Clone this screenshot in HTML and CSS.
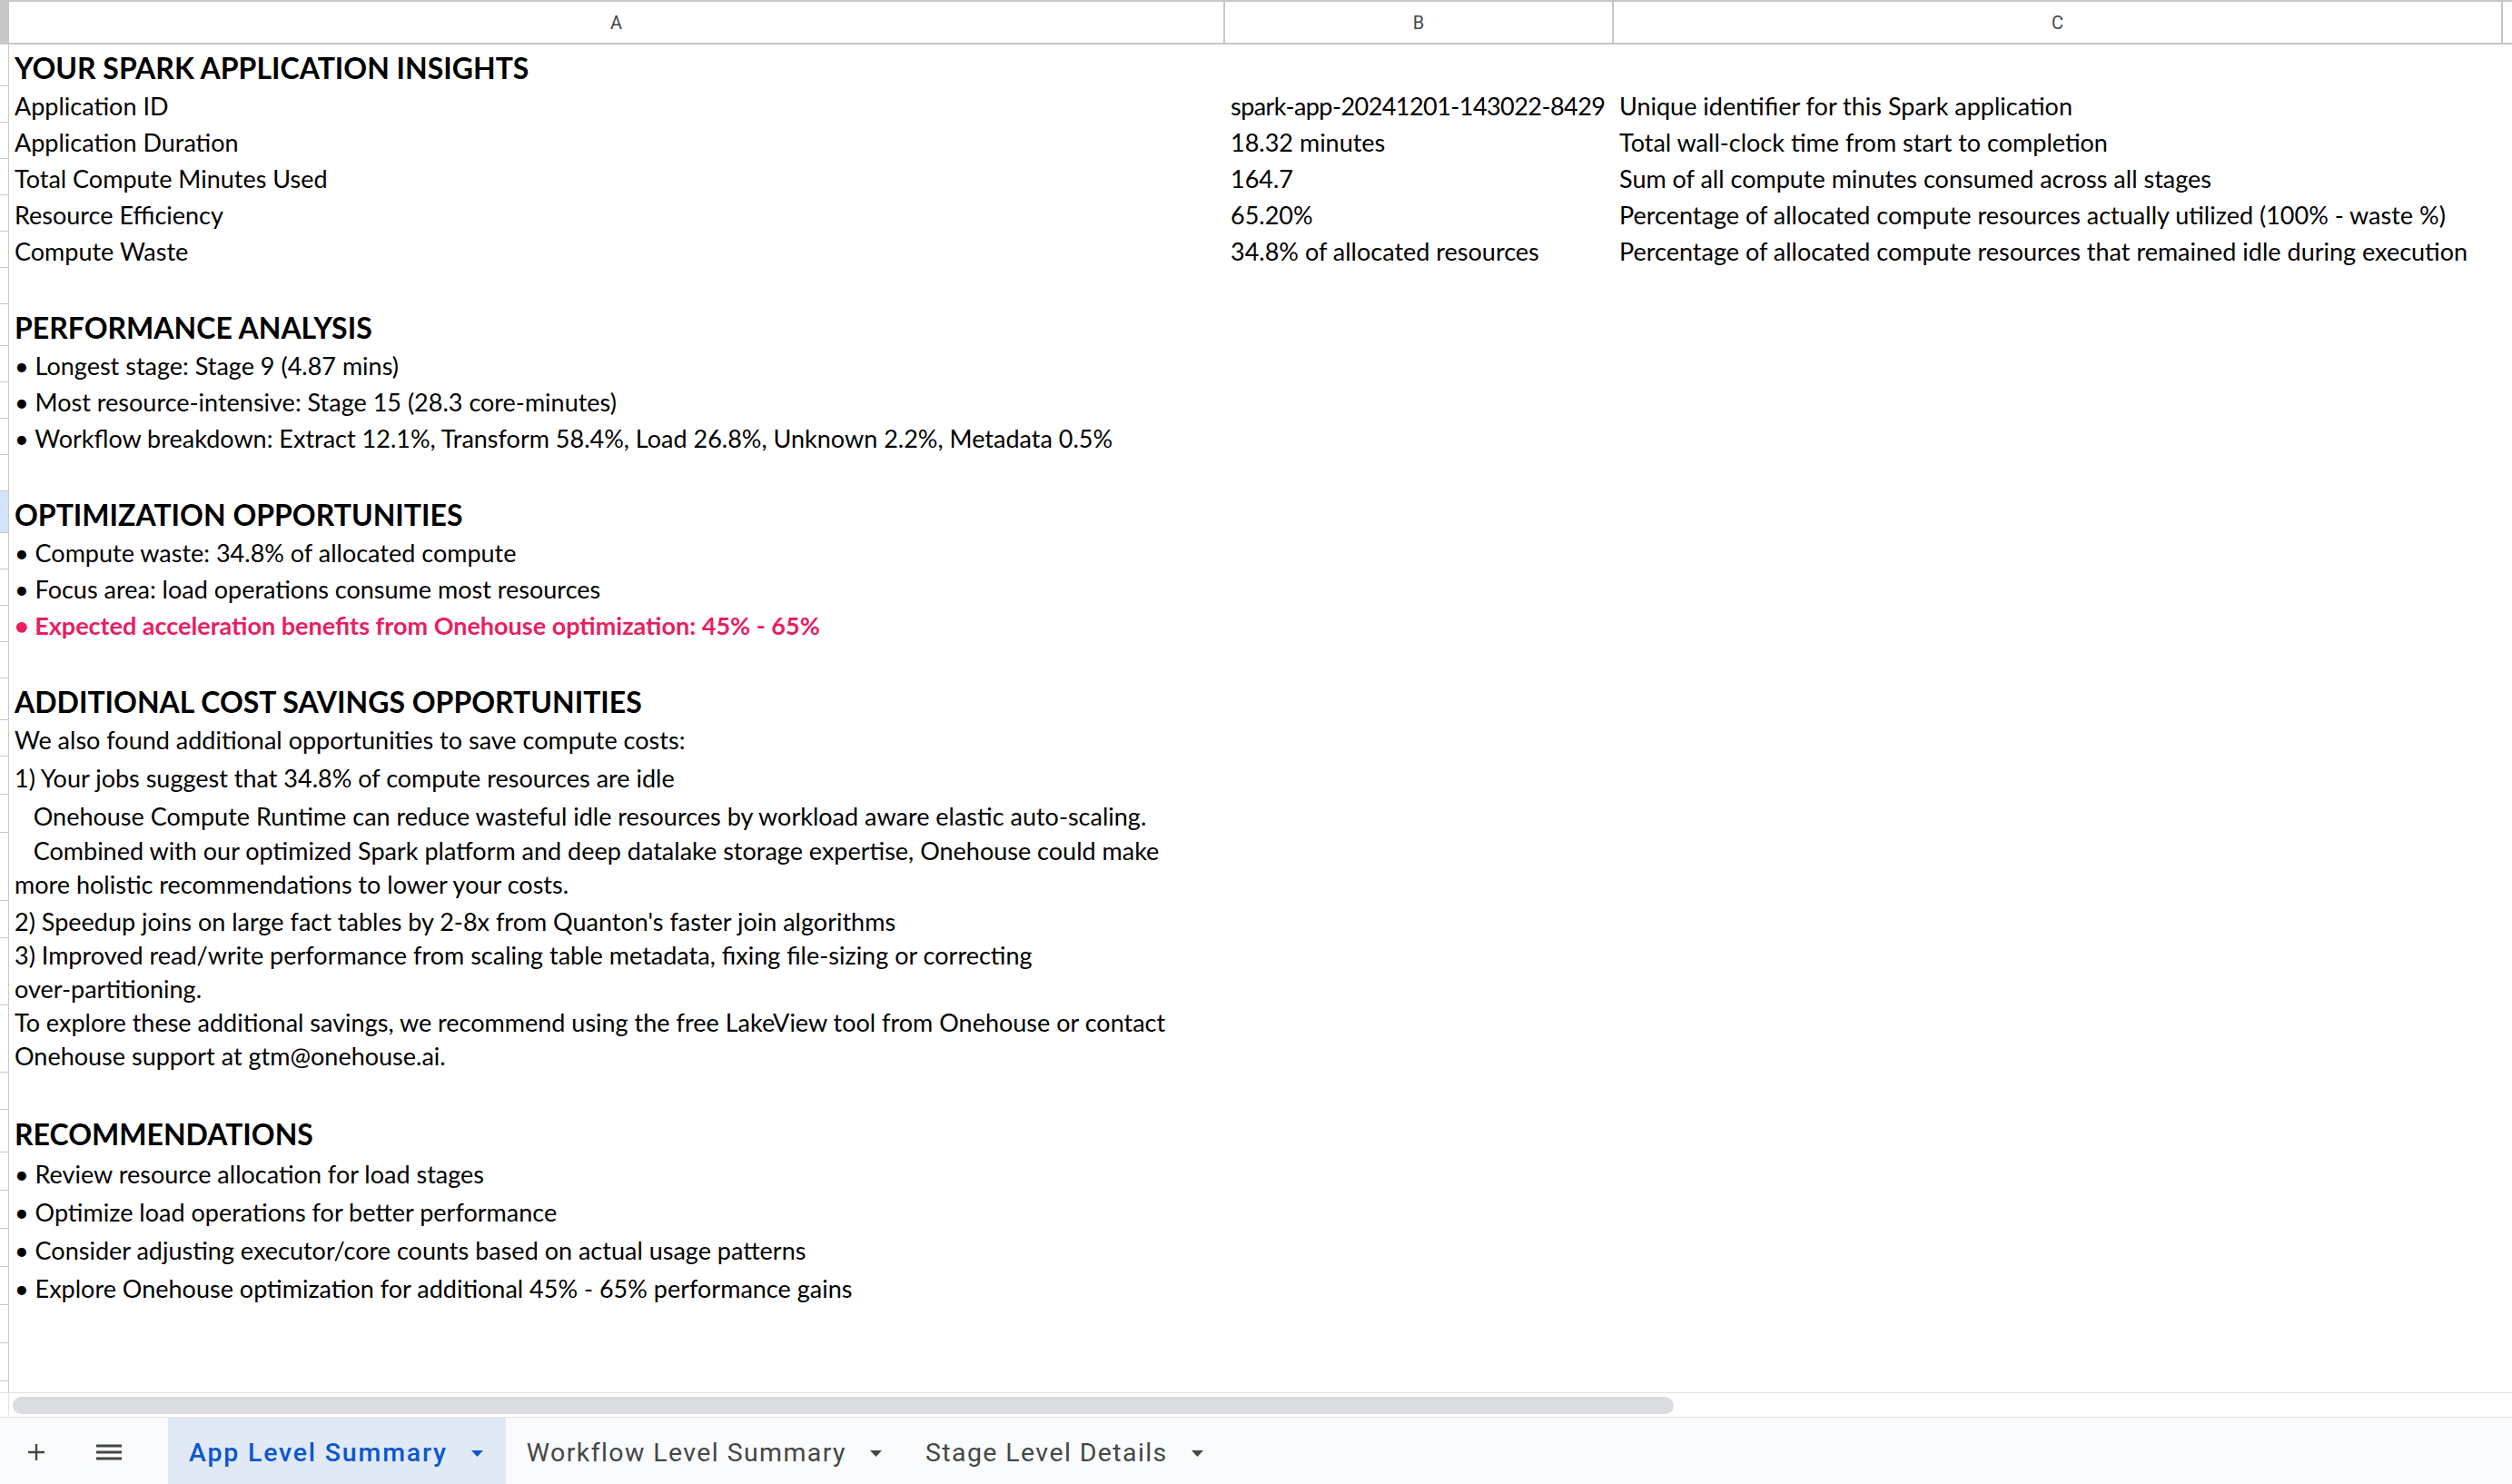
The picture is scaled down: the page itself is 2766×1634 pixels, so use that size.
FILE: index.html
```html
<!DOCTYPE html>
<html lang="en">
<head>
<meta charset="utf-8">
<title>App Level Summary</title>
<link rel="stylesheet" href="styles.css">
</head>
<body>
<div class="app">
  <div class="sheet">
    <div class="colhead">
      <div class="corner"></div>
      <div class="ch">A</div>
      <div class="ch">B</div>
      <div class="ch">C</div>
      <div class="ch last"></div>
    </div>

    <div class="row h46"><div class="rh"></div><div class="cell hd">YOUR SPARK APPLICATION INSIGHTS</div><div class="cell"></div><div class="cell"></div><div class="cell"></div></div>
    <div class="row h40"><div class="rh"></div><div class="cell">Application ID</div><div class="cell tight">spark-app-20241201-143022-8429</div><div class="cell">Unique identifier for this Spark application</div><div class="cell"></div></div>
    <div class="row h40"><div class="rh"></div><div class="cell">Application Duration</div><div class="cell">18.32 minutes</div><div class="cell">Total wall-clock time from start to completion</div><div class="cell"></div></div>
    <div class="row h40"><div class="rh"></div><div class="cell">Total Compute Minutes Used</div><div class="cell">164.7</div><div class="cell">Sum of all compute minutes consumed across all stages</div><div class="cell"></div></div>
    <div class="row h40"><div class="rh"></div><div class="cell">Resource Efficiency</div><div class="cell">65.20%</div><div class="cell">Percentage of allocated compute resources actually utilized (100% - waste %)</div><div class="cell"></div></div>
    <div class="row h40"><div class="rh"></div><div class="cell">Compute Waste</div><div class="cell">34.8% of allocated resources</div><div class="cell">Percentage of allocated compute resources that remained idle during execution</div><div class="cell"></div></div>
    <div class="row h40"><div class="rh"></div><div class="cell"></div><div class="cell"></div><div class="cell"></div><div class="cell"></div></div>

    <div class="row h46"><div class="rh"></div><div class="cell hd">PERFORMANCE ANALYSIS</div><div class="cell"></div><div class="cell"></div><div class="cell"></div></div>
    <div class="row h40"><div class="rh"></div><div class="cell">• Longest stage: Stage 9 (4.87 mins)</div><div class="cell"></div><div class="cell"></div><div class="cell"></div></div>
    <div class="row h40"><div class="rh"></div><div class="cell">• Most resource-intensive: Stage 15 (28.3 core-minutes)</div><div class="cell"></div><div class="cell"></div><div class="cell"></div></div>
    <div class="row h40"><div class="rh"></div><div class="cell">• Workflow breakdown: Extract 12.1%, Transform 58.4%, Load 26.8%, Unknown 2.2%, Metadata 0.5%</div><div class="cell"></div><div class="cell"></div><div class="cell"></div></div>
    <div class="row h40"><div class="rh"></div><div class="cell"></div><div class="cell"></div><div class="cell"></div><div class="cell"></div></div>

    <div class="row h46"><div class="rh sel"></div><div class="cell hd">OPTIMIZATION OPPORTUNITIES</div><div class="cell"></div><div class="cell"></div><div class="cell"></div></div>
    <div class="row h40"><div class="rh"></div><div class="cell">• Compute waste: 34.8% of allocated compute</div><div class="cell"></div><div class="cell"></div><div class="cell"></div></div>
    <div class="row h40"><div class="rh"></div><div class="cell">• Focus area: load operations consume most resources</div><div class="cell"></div><div class="cell"></div><div class="cell"></div></div>
    <div class="row h40"><div class="rh"></div><div class="cell pink">• Expected acceleration benefits from Onehouse optimization: 45% - 65%</div><div class="cell"></div><div class="cell"></div><div class="cell"></div></div>
    <div class="row h40"><div class="rh"></div><div class="cell"></div><div class="cell"></div><div class="cell"></div><div class="cell"></div></div>

    <div class="row h46"><div class="rh"></div><div class="cell hd">ADDITIONAL COST SAVINGS OPPORTUNITIES</div><div class="cell"></div><div class="cell"></div><div class="cell"></div></div>
    <div class="row h40"><div class="rh"></div><div class="cell">We also found additional opportunities to save compute costs:</div><div class="cell"></div><div class="cell"></div><div class="cell"></div></div>
    <div class="row h42"><div class="rh"></div><div class="cell">1) Your jobs suggest that 34.8% of compute resources are idle</div><div class="cell"></div><div class="cell"></div><div class="cell"></div></div>
    <div class="row h42"><div class="rh"></div><div class="cell">   Onehouse Compute Runtime can reduce wasteful idle resources by workload aware elastic auto-scaling.</div><div class="cell"></div><div class="cell"></div><div class="cell"></div></div>
    <div class="row h75"><div class="rh"></div><div class="cell">   Combined with our optimized Spark platform and deep datalake storage expertise, Onehouse could make<br>more holistic recommendations to lower your costs.</div><div class="cell"></div><div class="cell"></div><div class="cell"></div></div>
    <div class="row h41"><div class="rh"></div><div class="cell">2) Speedup joins on large fact tables by 2-8x from Quanton's faster join algorithms</div><div class="cell"></div><div class="cell"></div><div class="cell"></div></div>
    <div class="row h74"><div class="rh"></div><div class="cell">3) Improved read/write performance from scaling table metadata, fixing file-sizing or correcting<br>over-partitioning.</div><div class="cell"></div><div class="cell"></div><div class="cell"></div></div>
    <div class="row h73"><div class="rh"></div><div class="cell">To explore these additional savings, we recommend using the free LakeView tool from Onehouse or contact<br>Onehouse support at gtm@onehouse.ai.</div><div class="cell"></div><div class="cell"></div><div class="cell"></div></div>
    <div class="row h42"><div class="rh"></div><div class="cell"></div><div class="cell"></div><div class="cell"></div><div class="cell"></div></div>

    <div class="row h47"><div class="rh"></div><div class="cell hd">RECOMMENDATIONS</div><div class="cell"></div><div class="cell"></div><div class="cell"></div></div>
    <div class="row h42"><div class="rh"></div><div class="cell">• Review resource allocation for load stages</div><div class="cell"></div><div class="cell"></div><div class="cell"></div></div>
    <div class="row h42"><div class="rh"></div><div class="cell">• Optimize load operations for better performance</div><div class="cell"></div><div class="cell"></div><div class="cell"></div></div>
    <div class="row h42"><div class="rh"></div><div class="cell">• Consider adjusting executor/core counts based on actual usage patterns</div><div class="cell"></div><div class="cell"></div><div class="cell"></div></div>
    <div class="row h42"><div class="rh"></div><div class="cell">• Explore Onehouse optimization for additional 45% - 65% performance gains</div><div class="cell"></div><div class="cell"></div><div class="cell"></div></div>
    <div class="row h42"><div class="rh"></div><div class="cell"></div><div class="cell"></div><div class="cell"></div><div class="cell"></div></div>
    <div class="row h42"><div class="rh"></div><div class="cell"></div><div class="cell"></div><div class="cell"></div><div class="cell"></div></div>
    <div class="row h42"><div class="rh"></div><div class="cell"></div><div class="cell"></div><div class="cell"></div><div class="cell"></div></div>
  </div>

  <div class="hscroll">
    <div class="hs-rh"></div>
    <div class="thumb"></div>
  </div>

  <div class="tabs">
    <div class="tbtn" title="Add sheet">
      <svg width="22" height="22" viewBox="0 0 22 22"><path d="M11 2v18M2 11h18" stroke="#444746" stroke-width="2.4" fill="none"/></svg>
    </div>
    <div class="tbtn" title="All sheets">
      <svg width="30" height="20" viewBox="0 0 30 20"><path d="M1 3h28M1 10h28M1 17h28" stroke="#444746" stroke-width="3" fill="none"/></svg>
    </div>
    <div class="tab active"><span class="tname">App Level Summary</span><svg class="caret" width="13" height="7" viewBox="0 0 13 7"><polygon points="0,0 13,0 6.5,7" fill="currentColor"/></svg></div>
    <div class="tab"><span class="tname">Workflow Level Summary</span><svg class="caret" width="13" height="7" viewBox="0 0 13 7"><polygon points="0,0 13,0 6.5,7" fill="currentColor"/></svg></div>
    <div class="tab"><span class="tname">Stage Level Details</span><svg class="caret" width="13" height="7" viewBox="0 0 13 7"><polygon points="0,0 13,0 6.5,7" fill="currentColor"/></svg></div>
  </div>
</div>
</body>
</html>
```

FILE: styles.css
```css
* { box-sizing: border-box; }

html, body {
  margin: 0;
  padding: 0;
}

body {
  width: 2766px;
  height: 1634px;
  overflow: hidden;
  background: #ffffff;
  color: #000000;
  font-family: Lato, "Open Sans", "DejaVu Sans", sans-serif;
}

.app {
  display: flex;
  flex-direction: column;
  height: 1634px;
}

.sheet {
  flex: 1;
  overflow: hidden;
}

.colhead,
.row {
  display: grid;
  grid-template-columns: 10px 1339px 428px 979px 1fr;
}

.colhead {
  height: 49px;
  border-top: 2px solid #c7c7c7;
  border-bottom: 2px solid #c7c7c7;
}

.corner {
  background: #c7c7c7;
}

.ch {
  border-right: 2px solid #c7c7c7;
  display: flex;
  align-items: center;
  justify-content: center;
  font-family: Roboto, "Liberation Sans", sans-serif;
  font-size: 20px;
  color: #444746;
  padding-top: 1px;
}

.ch.last { border-right: none; }

.h40 { height: 40px; }
.h41 { height: 41px; }
.h42 { height: 42px; }
.h46 { height: 46px; }
.h47 { height: 47px; }
.h73 { height: 73px; }
.h74 { height: 74px; }
.h75 { height: 75px; }

.rh {
  border-right: 1px solid #c7c7c7;
  border-bottom: 1px solid #c7c7c7;
}

.rh.sel {
  background: #d3e3fd;
}

.cell {
  display: flex;
  align-items: flex-end;
  padding: 0 5px 0 6px;
  font-size: 27px;
  line-height: 37px;
  white-space: pre;
  overflow: visible;
}

.cell.tight {
  letter-spacing: -0.55px;
}

.cell.hd {
  font-weight: 700;
  font-size: 32px;
  padding-bottom: 2px;
}

.cell.pink {
  color: #e91e63;
  font-weight: 700;
}

.hscroll {
  height: 28px;
  border-top: 1px solid #e1e1e1;
  border-bottom: 1px solid #e1e3e1;
  display: flex;
  align-items: center;
}

.hs-rh {
  width: 10px;
  height: 100%;
  border-right: 1px solid #e1e1e1;
}

.thumb {
  margin-left: 4px;
  width: 1829px;
  height: 19px;
  background: #dadce0;
  border-radius: 10px;
}

.tabs {
  height: 73px;
  background: #f9fbfd;
  display: flex;
  align-items: stretch;
  font-family: Roboto, "Liberation Sans", sans-serif;
}

.tbtn {
  width: 80px;
  display: flex;
  align-items: center;
  justify-content: center;
  padding-top: 2px;
}

.tbtn + .tab {
  margin-left: 25px;
}

.tab {
  display: flex;
  align-items: center;
  padding: 3px 25px 0 23px;
  font-size: 28.5px;
  letter-spacing: 1.4px;
  color: #444746;
}

.tab.active {
  background: #e1e9f7;
  color: #0b57d0;
  font-weight: 500;
  letter-spacing: 1.8px;
}

.caret {
  margin-left: 26px;
  margin-top: 2px;
}
```
